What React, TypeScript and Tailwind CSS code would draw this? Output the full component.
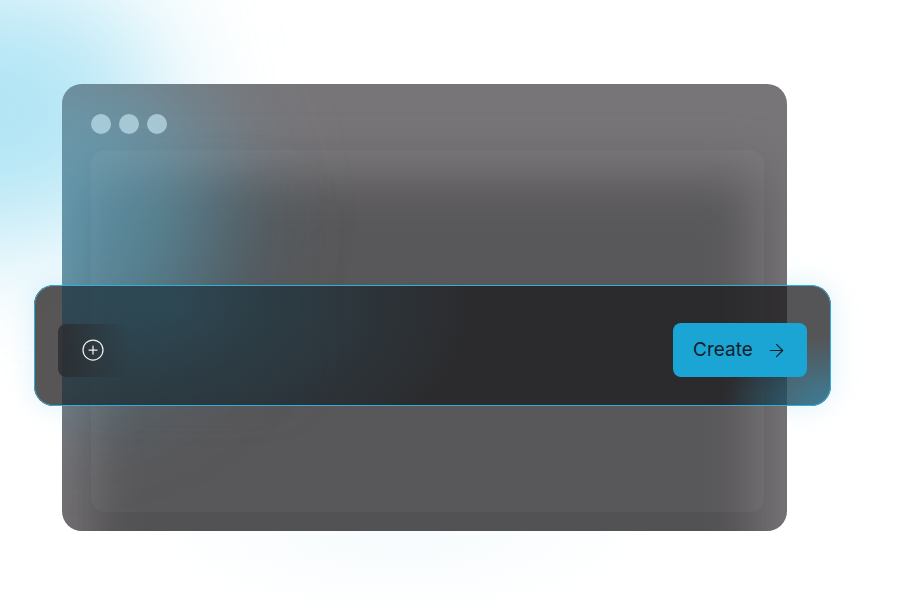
import { ArrowRight, CirclePlus } from 'lucide-react'

export default function App() {
  return (
    <div className="relative w-[902px] h-[600px] overflow-hidden bg-white font-['Inter',sans-serif]">
      {/* glows behind the window */}
      <div className="absolute left-[-210px] top-[-20px] w-[370px] h-[260px] rounded-full bg-[#7fd4ee]/60 blur-[60px]" />
      <div className="absolute inset-0 bg-[radial-gradient(ellipse_260px_90px_at_400px_530px,rgba(120,200,235,0.06),rgba(120,200,235,0)_100%)]" />
      <div className="absolute left-[34px] top-[285px] w-[797px] h-[121px] rounded-[20px] shadow-[0_0_28px_rgba(90,190,230,0.22)]" />

      <div className="relative pt-[84px] pl-[62px]">
        <div className="relative w-[725px] h-[447px] rounded-[20px] overflow-hidden bg-[#787578] pt-[30px] px-[29px]">
          {/* dark blurred mass inside the window */}
          <div className="absolute left-[25px] top-[90px] w-[670px] h-[420px] bg-[#525153] blur-[26px]" />
          <div className="absolute left-[40px] top-[120px] w-[170px] h-[170px] bg-[#4a4a4c] blur-[30px]" />
          {/* teal glow on top of window */}
          <div className="absolute left-[-190px] top-[-40px] w-[350px] h-[340px] rounded-full bg-[#5abee1]/50 blur-[60px]" />

          <div className="relative flex gap-2">
            <span className="w-5 h-5 rounded-full bg-[#cdeefa]/60" />
            <span className="w-5 h-5 rounded-full bg-[#cdeefa]/60" />
            <span className="w-5 h-5 rounded-full bg-[#cdeefa]/60" />
          </div>
          <div className="relative mt-[16px] w-[673px] h-[362px] rounded-[14px] bg-white/[0.04]" />
        </div>
      </div>

      {/* create bar */}
      <div className="absolute left-[34px] top-[285px] w-[797px] h-[121px] rounded-[20px] bg-[#1c1b1d]/75 overflow-hidden flex items-center justify-between pt-[9px] px-[24px]">
        <div className="absolute inset-y-0 left-0 w-[28px] bg-[#5a5557]/70" />
        <div className="absolute inset-y-0 left-[28px] right-0 bg-[radial-gradient(ellipse_310px_190px_at_110px_20px,rgba(60,170,210,0.2),rgba(60,170,210,0.1)_55%,rgba(60,170,210,0)_100%)]" />
        <div className="absolute inset-0 bg-[radial-gradient(ellipse_110px_70px_at_797px_121px,rgba(40,160,205,0.55),rgba(40,160,205,0)_100%)]" />
        <div className="relative w-[72px] h-[53px] rounded-l-lg bg-gradient-to-r from-[#2a2a2c]/80 to-[#2a2a2c]/0 flex items-center pl-[23px]">
          <CirclePlus size={24} strokeWidth={1.25} className="text-white/90" />
        </div>
        <button className="relative w-[134px] h-[54px] pt-px rounded-lg bg-[#1ba5d4] text-[#14212c] text-[19px] flex items-center justify-center gap-[13px]">
          Create
          <ArrowRight size={21} strokeWidth={1.4} />
        </button>
        <div className="absolute inset-0 rounded-[20px] border border-[#2fb0dc]" />
      </div>
    </div>
  )
}
